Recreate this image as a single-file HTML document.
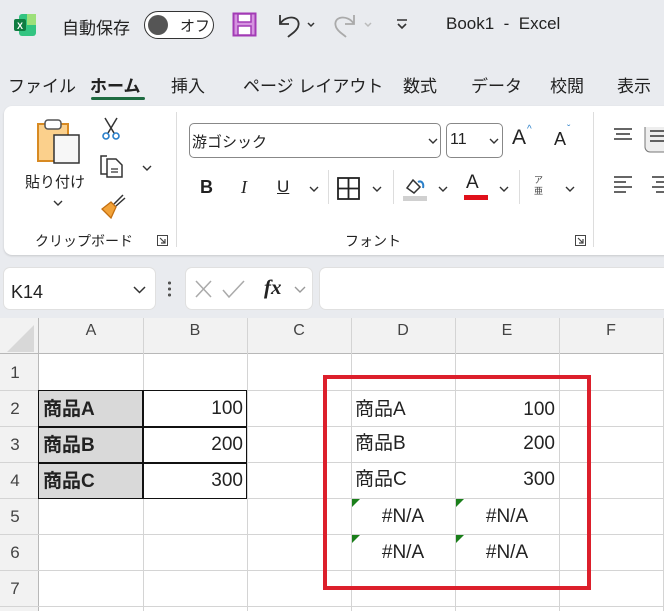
<!DOCTYPE html>
<html><head><meta charset="utf-8"><style>
*{margin:0;padding:0;box-sizing:border-box}
body{width:664px;height:611px;overflow:hidden;background:#e9ebef;font-family:"Liberation Sans","Noto Sans CJK JP",sans-serif;color:#222;position:relative}
.a{position:absolute;white-space:nowrap}
.t{font-size:17px}
.grid{position:absolute;left:0;top:318px;width:664px;height:293px;background:#fff}
.vl{position:absolute;top:318px;width:1px;background:#d4d4d4;height:293px}
.hl{position:absolute;left:0;height:1px;background:#d4d4d4;width:664px}
.ch{position:absolute;top:322px;font-size:16px;color:#444;text-align:center;width:104px}
.rh{position:absolute;left:0;width:30px;text-align:center;font-size:17px;color:#444}
.c{position:absolute;font-size:19px;line-height:36px;height:36px}
</style></head><body>
<!-- title bar -->
<div class="a" style="left:14px;top:13px;width:24px;height:24px">
<svg width="24" height="24"><rect x="5" y="1" width="17" height="22" rx="3" fill="#33c481"/><rect x="13" y="1" width="9" height="11" fill="#9de07a"/><rect x="0" y="6" width="12" height="12" rx="2" fill="#107c41"/><text x="3" y="16" font-size="9" fill="#fff" font-weight="bold" font-family="Liberation Sans">X</text></svg></div>
<div class="a" style="left:62px;top:14px;font-size:17px">自動保存</div>
<div class="a" style="left:144px;top:11px;width:70px;height:28px;border:1.5px solid #333;border-radius:14px;background:#fff"></div>
<div class="a" style="left:148px;top:15px;width:20px;height:20px;border-radius:10px;background:#555"></div>
<div class="a" style="left:180px;top:15px;font-size:15px">オフ</div>
<svg class="a" style="left:232px;top:12px" width="26" height="26"><rect x="1.5" y="1.5" width="22" height="22" fill="#d593e0" stroke="#a23bb5" stroke-width="2"/><rect x="6" y="2" width="13" height="8" fill="#fff" stroke="#a23bb5" stroke-width="1.5"/><rect x="6" y="14" width="13" height="9" fill="#fff" stroke="#a23bb5" stroke-width="1.5"/></svg>
<svg class="a" style="left:276px;top:12px" width="44" height="28"><path d="M4 3 V12 H13 M4 12 C10 2 26 4 22 15 C20 20 15 22 12 25" fill="none" stroke="#333" stroke-width="1.8"/><path d="M32 11 l3 3 3-3" fill="none" stroke="#333" stroke-width="1.5"/></svg>
<svg class="a" style="left:332px;top:12px" width="44" height="28"><path d="M22 3 V12 H13 M22 12 C16 2 0 4 4 15 C6 20 11 22 14 25" fill="none" stroke="#aaa" stroke-width="1.8"/><path d="M33 11 l3 3 3-3" fill="none" stroke="#bbb" stroke-width="1.5"/></svg>
<svg class="a" style="left:395px;top:17px" width="14" height="14"><path d="M2 3 H12 M3 7 l4 4 4-4" fill="none" stroke="#333" stroke-width="1.6"/></svg>
<div class="a" style="left:446px;top:14px;font-size:17px">Book1&nbsp; - &nbsp;Excel</div>
<!-- tabs -->
<div class="a t" style="left:8px;top:72px">ファイル</div>
<div class="a t" style="left:90px;top:72px;font-weight:bold">ホーム</div>
<div class="a" style="left:91px;top:97px;width:54px;height:3px;background:#1e6b41;border-radius:2px"></div>
<div class="a t" style="left:171px;top:72px">挿入</div>
<div class="a t" style="left:243px;top:72px">ページ レイアウト</div>
<div class="a t" style="left:403px;top:72px">数式</div>
<div class="a t" style="left:471px;top:72px">データ</div>
<div class="a t" style="left:550px;top:72px">校閲</div>
<div class="a t" style="left:617px;top:72px">表示</div>
<!-- ribbon -->
<div class="a" style="left:4px;top:106px;width:680px;height:149px;background:#fff;border-radius:8px;box-shadow:0 1px 2px rgba(0,0,0,.15)"></div>
<svg class="a" style="left:36px;top:117px" width="46" height="48"><rect x="2" y="7" width="30" height="37" fill="#fbd08c" stroke="#d88a22" stroke-width="2"/><rect x="9" y="3" width="16" height="9" rx="3" fill="#fff" stroke="#555" stroke-width="1.5"/><rect x="18" y="18" width="25" height="28" fill="#f7f7f7" stroke="#333" stroke-width="1.5"/></svg>
<div class="a" style="left:25px;top:171px;font-size:15px">貼り付け</div>
<svg class="a" style="left:53px;top:200px" width="10" height="7"><path d="M1 1 l4 4 4-4" fill="none" stroke="#333" stroke-width="1.4"/></svg>
<svg class="a" style="left:100px;top:116px" width="22" height="26"><path d="M5 2 L14 17 M17 2 L8 17" stroke="#333" stroke-width="1.5"/><circle cx="6" cy="20" r="3" fill="none" stroke="#2a7fc9" stroke-width="1.6"/><circle cx="16" cy="20" r="3" fill="none" stroke="#2a7fc9" stroke-width="1.6"/></svg>
<svg class="a" style="left:99px;top:154px" width="26" height="26"><path d="M8 2 H2 V20 H8" fill="none" stroke="#333" stroke-width="1.5"/><path d="M8 5 H17 L23 11 V23 H8 Z" fill="#fff" stroke="#333" stroke-width="1.5"/><path d="M12 15 H19 M12 18 H19" stroke="#333" stroke-width="1.3"/></svg>
<svg class="a" style="left:142px;top:165px" width="10" height="7"><path d="M1 1 l4 4 4-4" fill="none" stroke="#333" stroke-width="1.4"/></svg>
<svg class="a" style="left:99px;top:193px" width="28" height="26"><path d="M3 16 L12 25 L17 14 L12 9 Z" fill="#f2a33a" stroke="#c46f10" stroke-width="1.3"/><path d="M15 11 L24 2 M17 13 L26 5" stroke="#333" stroke-width="1.5"/></svg>
<div class="a" style="left:35px;top:231px;font-size:14px">クリップボード</div>
<svg class="a" style="left:157px;top:235px" width="11" height="11"><rect x=".5" y=".5" width="10" height="10" fill="none" stroke="#444"/><path d="M3 3 L8 8 M8 4 V8 H4" fill="none" stroke="#444" stroke-width="1.2"/></svg>
<div class="a" style="left:176px;top:112px;width:1px;height:135px;background:#ddd"></div>
<div class="a" style="left:189px;top:123px;width:252px;height:35px;border:1px solid #888;border-radius:5px"></div>
<div class="a" style="left:192px;top:131px;font-size:15px">游ゴシック</div>
<svg class="a" style="left:428px;top:138px" width="10" height="7"><path d="M1 1 l4 4 4-4" fill="none" stroke="#333" stroke-width="1.4"/></svg>
<div class="a" style="left:446px;top:123px;width:57px;height:35px;border:1px solid #888;border-radius:5px"></div>
<div class="a" style="left:450px;top:131px;font-size:16px">11</div>
<svg class="a" style="left:489px;top:138px" width="10" height="7"><path d="M1 1 l4 4 4-4" fill="none" stroke="#333" stroke-width="1.4"/></svg>
<div class="a" style="left:512px;top:126px;font-size:21px">A</div><div class="a" style="left:527px;top:124px;font-size:10px;color:#2a7fc9">^</div>
<div class="a" style="left:554px;top:129px;font-size:18px">A</div><div class="a" style="left:567px;top:124px;font-size:10px;color:#2a7fc9">ˇ</div>
<div class="a" style="left:200px;top:177px;font-size:18px;font-weight:bold">B</div>
<div class="a" style="left:241px;top:177px;font-size:18px;font-family:'Liberation Serif',serif;font-style:italic">I</div>
<div class="a" style="left:277px;top:177px;font-size:17px;text-decoration:underline">U</div>
<svg class="a" style="left:309px;top:186px" width="10" height="7"><path d="M1 1 l4 4 4-4" fill="none" stroke="#333" stroke-width="1.4"/></svg>
<div class="a" style="left:328px;top:170px;width:1px;height:34px;background:#ddd"></div>
<svg class="a" style="left:337px;top:177px" width="24" height="24"><rect x="1" y="1" width="21" height="21" fill="none" stroke="#222" stroke-width="1.8"/><path d="M11.5 1 V22 M1 11.5 H22" stroke="#222" stroke-width="1.8"/></svg>
<svg class="a" style="left:372px;top:186px" width="10" height="7"><path d="M1 1 l4 4 4-4" fill="none" stroke="#333" stroke-width="1.4"/></svg>
<div class="a" style="left:393px;top:170px;width:1px;height:34px;background:#ddd"></div>
<svg class="a" style="left:402px;top:176px" width="26" height="26"><path d="M5 12 L11 4 L18 11 L12 17 Z" fill="none" stroke="#333" stroke-width="1.5"/><path d="M16 6 C20 4 22 8 21 12" fill="none" stroke="#2a7fc9" stroke-width="2"/><rect x="1" y="20" width="24" height="5" fill="#d0d0d0"/></svg>
<svg class="a" style="left:438px;top:186px" width="10" height="7"><path d="M1 1 l4 4 4-4" fill="none" stroke="#333" stroke-width="1.4"/></svg>
<div class="a" style="left:466px;top:172px;font-size:19px">A</div>
<div class="a" style="left:464px;top:195px;width:24px;height:5px;background:#e0101a"></div>
<svg class="a" style="left:499px;top:186px" width="10" height="7"><path d="M1 1 l4 4 4-4" fill="none" stroke="#333" stroke-width="1.4"/></svg>
<div class="a" style="left:519px;top:170px;width:1px;height:34px;background:#ddd"></div>
<div class="a" style="left:534px;top:175px;font-size:9px;line-height:11px;color:#444;text-align:center">ア<br>亜</div>
<svg class="a" style="left:565px;top:186px" width="10" height="7"><path d="M1 1 l4 4 4-4" fill="none" stroke="#333" stroke-width="1.4"/></svg>
<div class="a" style="left:345px;top:231px;font-size:14px">フォント</div>
<svg class="a" style="left:575px;top:235px" width="11" height="11"><rect x=".5" y=".5" width="10" height="10" fill="none" stroke="#444"/><path d="M3 3 L8 8 M8 4 V8 H4" fill="none" stroke="#444" stroke-width="1.2"/></svg>
<div class="a" style="left:593px;top:112px;width:1px;height:135px;background:#ddd"></div>
<svg class="a" style="left:612px;top:127px" width="52" height="70"><path d="M2 2 H20 M4 7 H18 M2 12 H20" stroke="#333" stroke-width="1.5"/><rect x="33" y="-5" width="30" height="30" rx="5" fill="#eee" stroke="#777"/><path d="M38 4 H56 M38 9 H56 M38 14 H56" stroke="#333" stroke-width="1.5"/><path d="M2 50 H20 M2 55 H14 M2 60 H20 M2 65 H14" stroke="#333" stroke-width="1.5"/><path d="M40 50 H58 M44 55 H58 M40 60 H58 M44 65 H58" stroke="#333" stroke-width="1.5"/></svg>
<!-- formula bar -->
<div class="a" style="left:4px;top:268px;width:151px;height:41px;background:#fff;border-radius:6px;box-shadow:0 0 0 1px #e0e0e0"></div>
<div class="a" style="left:11px;top:282px;font-size:18px">K14</div>
<svg class="a" style="left:133px;top:286px" width="13" height="8"><path d="M1 1 l5.5 5.5 5.5-5.5" fill="none" stroke="#333" stroke-width="1.5"/></svg>
<div class="a" style="left:168px;top:280px;width:3px;height:17px;background:radial-gradient(circle,#555 1.5px,transparent 1.6px) 0 0/3px 6px"></div>
<div class="a" style="left:186px;top:268px;width:126px;height:41px;background:#fff;border-radius:6px;box-shadow:0 0 0 1px #e0e0e0"></div>
<svg class="a" style="left:194px;top:279px" width="60" height="20"><path d="M2 2 L17 18 M17 2 L2 18" stroke="#aaa" stroke-width="1.5"/><path d="M29 11 L35 18 L50 2" fill="none" stroke="#aaa" stroke-width="1.5"/></svg>
<div class="a" style="left:264px;top:275px;font-size:21px;font-family:'Liberation Serif',serif;font-style:italic;font-weight:bold">fx</div>
<svg class="a" style="left:294px;top:286px" width="12" height="8"><path d="M1 1 l5 5 5-5" fill="none" stroke="#999" stroke-width="1.4"/></svg>
<div class="a" style="left:320px;top:268px;width:350px;height:41px;background:#fff;border-radius:6px;box-shadow:0 0 0 1px #e0e0e0"></div>
<!-- grid -->
<div class="grid"></div>
<div class="a" style="left:0;top:318px;width:664px;height:36px;background:#f2f2f2"></div>
<div class="a" style="left:0;top:318px;width:38px;height:293px;background:#f2f2f2"></div>
<svg class="a" style="left:7px;top:325px" width="28" height="27"><path d="M27 0 V27 H0 Z" fill="#d8d8d8"/></svg>
<div class="hl" style="top:353px;background:#b8b8b8"></div>
<div class="a" style="left:38px;top:318px;width:1px;height:293px;background:#b8b8b8"></div>
<div class="vl" style="left:143px"></div><div class="vl" style="left:247px"></div><div class="vl" style="left:351px"></div><div class="vl" style="left:455px"></div><div class="vl" style="left:559px"></div><div class="vl" style="left:663px"></div>
<div class="hl" style="top:390px"></div><div class="hl" style="top:426px"></div><div class="hl" style="top:462px"></div><div class="hl" style="top:498px"></div><div class="hl" style="top:534px"></div><div class="hl" style="top:570px"></div><div class="hl" style="top:606px"></div>
<div class="ch" style="left:39px">A</div><div class="ch" style="left:143px">B</div><div class="ch" style="left:247px">C</div><div class="ch" style="left:351px">D</div><div class="ch" style="left:455px">E</div><div class="ch" style="left:559px">F</div>
<div class="rh" style="top:363px">1</div><div class="rh" style="top:399px">2</div><div class="rh" style="top:435px">3</div><div class="rh" style="top:471px">4</div><div class="rh" style="top:507px">5</div><div class="rh" style="top:543px">6</div><div class="rh" style="top:579px">7</div>
<!-- table A-B -->
<div class="a" style="left:39px;top:390px;width:104px;height:108px;background:#d9d9d9"></div>
<div class="a" style="left:38px;top:390px;width:209px;height:109px;border:1.5px solid #111"></div>
<div class="a" style="left:142px;top:390px;width:1.5px;height:108px;background:#111"></div>
<div class="a" style="left:38px;top:426px;width:209px;height:1.5px;background:#111"></div>
<div class="a" style="left:38px;top:462px;width:209px;height:1.5px;background:#111"></div>
<div class="c" style="left:43px;top:392px;font-weight:bold">商品A</div>
<div class="c" style="left:43px;top:428px;font-weight:bold">商品B</div>
<div class="c" style="left:43px;top:464px;font-weight:bold">商品C</div>
<div class="c" style="left:143px;top:391px;width:100px;text-align:right">100</div>
<div class="c" style="left:143px;top:427px;width:100px;text-align:right">200</div>
<div class="c" style="left:143px;top:463px;width:100px;text-align:right">300</div>
<!-- D-E -->
<div class="c" style="left:355px;top:392px">商品A</div>
<div class="c" style="left:355px;top:426px">商品B</div>
<div class="c" style="left:355px;top:462px">商品C</div>
<div class="c" style="left:455px;top:392px;width:100px;text-align:right">100</div>
<div class="c" style="left:455px;top:426px;width:100px;text-align:right">200</div>
<div class="c" style="left:455px;top:462px;width:100px;text-align:right">300</div>
<div class="c" style="left:351px;top:499px;width:104px;text-align:center">#N/A</div>
<div class="c" style="left:455px;top:499px;width:104px;text-align:center">#N/A</div>
<div class="c" style="left:351px;top:535px;width:104px;text-align:center">#N/A</div>
<div class="c" style="left:455px;top:535px;width:104px;text-align:center">#N/A</div>
<svg class="a" style="left:352px;top:499px" width="8" height="8"><path d="M0 0 H8 L0 8Z" fill="#1a7f1a"/></svg>
<svg class="a" style="left:456px;top:499px" width="8" height="8"><path d="M0 0 H8 L0 8Z" fill="#1a7f1a"/></svg>
<svg class="a" style="left:352px;top:535px" width="8" height="8"><path d="M0 0 H8 L0 8Z" fill="#1a7f1a"/></svg>
<svg class="a" style="left:456px;top:535px" width="8" height="8"><path d="M0 0 H8 L0 8Z" fill="#1a7f1a"/></svg>
<!-- red box -->
<div class="a" style="left:323px;top:375px;width:268px;height:215px;border:4px solid #dc1f2b"></div>
</body></html>
